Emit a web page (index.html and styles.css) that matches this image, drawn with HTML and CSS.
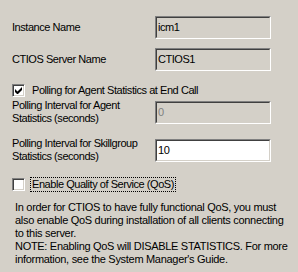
FILE: index.html
```html
<!DOCTYPE html>
<html>
<head>
<meta charset="utf-8">
<link rel="stylesheet" href="styles.css">
</head>
<body>
<div class="panel">
  <div class="row row-single r1">
    <span class="label">Instance Name</span>
    <div class="field disabled"><span>icm1</span></div>
  </div>
  <div class="row row-single r2">
    <span class="label">CTIOS Server Name</span>
    <div class="field disabled"><span>CTIOS1</span></div>
  </div>
  <div class="check-row r3">
    <span class="box"><svg width="9" height="9" viewBox="0 0 9 9"><path d="M1 3v3l2 2h1l4-4V1L3.5 5.5z" fill="#000"/></svg></span>
    <span class="check-label">Polling for Agent Statistics at End Call</span>
  </div>
  <div class="row row-double r4">
    <span class="label">Polling Interval for Agent<br>Statistics (seconds)</span>
    <div class="field disabled"><span class="greyed">0</span></div>
  </div>
  <div class="row row-double r5">
    <span class="label">Polling Interval for Skillgroup<br>Statistics (seconds)</span>
    <div class="field enabled"><span>10</span></div>
  </div>
  <div class="check-row r6">
    <span class="box"></span>
    <span class="check-label focus">Enable Quality of Service (QoS)</span>
  </div>
  <p class="note">In order for CTIOS to have fully functional QoS, you must also enable QoS during installation of all clients connecting to this server.<br>NOTE: Enabling QoS will DISABLE STATISTICS. For more information, see the System Manager's Guide.</p>
</div>
</body>
</html>
```
FILE: styles.css
```css
html, body {
  margin: 0;
  padding: 0;
  background: #d4d0c8;
}
body {
  width: 298px;
  height: 272px;
  overflow: hidden;
  font-family: "Liberation Sans", Arial, sans-serif;
  font-size: 11px;
  letter-spacing: -0.45px;
  color: #000;
}
.panel {
  padding: 16px 0 0 12px;
}
.row {
  display: grid;
  grid-template-columns: 143px 116px;
  align-items: center;
}
.label {
  line-height: 13px;
}
.field {
  box-sizing: border-box;
  height: 23px;
  border-style: solid;
  border-width: 1px;
  border-color: #808080 #ffffff #ffffff #808080;
  display: flex;
}
.field > span {
  flex: 1;
  border-style: solid;
  border-width: 1px;
  border-color: #404040 #d4d0c8 #d4d0c8 #404040;
  padding: 0 0 0 1px;
  line-height: 19px;
  font-size: 11px;
}
.field.disabled > span { background: #d4d0c8; }
.field.enabled > span { background: #ffffff; }
.greyed { color: #808080; }
.r2 { margin-top: 9px; }
.check-row {
  display: flex;
  align-items: center;
  height: 15px;
}
.r3 { margin-top: 12px; }
.r4 { margin-top: 1px; }
.r5 { margin-top: 12px; }
.r6 { margin-top: 14px; }
.box {
  box-sizing: border-box;
  width: 13px;
  height: 13px;
  background: #fff;
  border-style: solid;
  border-width: 1px;
  border-color: #808080 #ffffff #ffffff #808080;
  box-shadow: inset 1px 1px 0 #404040, inset -1px -1px 0 #d4d0c8;
  display: flex;
  align-items: center;
  justify-content: center;
  margin-right: 5px;
}
.check-label {
  line-height: 13px;
  padding: 0 1px;
  border: 1px solid transparent;
}
.check-label.focus {
  border: 1px dotted #000;
}
.note {
  margin: 9px 0 0 3px;
  line-height: 13px;
  width: 274px;
  letter-spacing: -0.3px;
}
```
